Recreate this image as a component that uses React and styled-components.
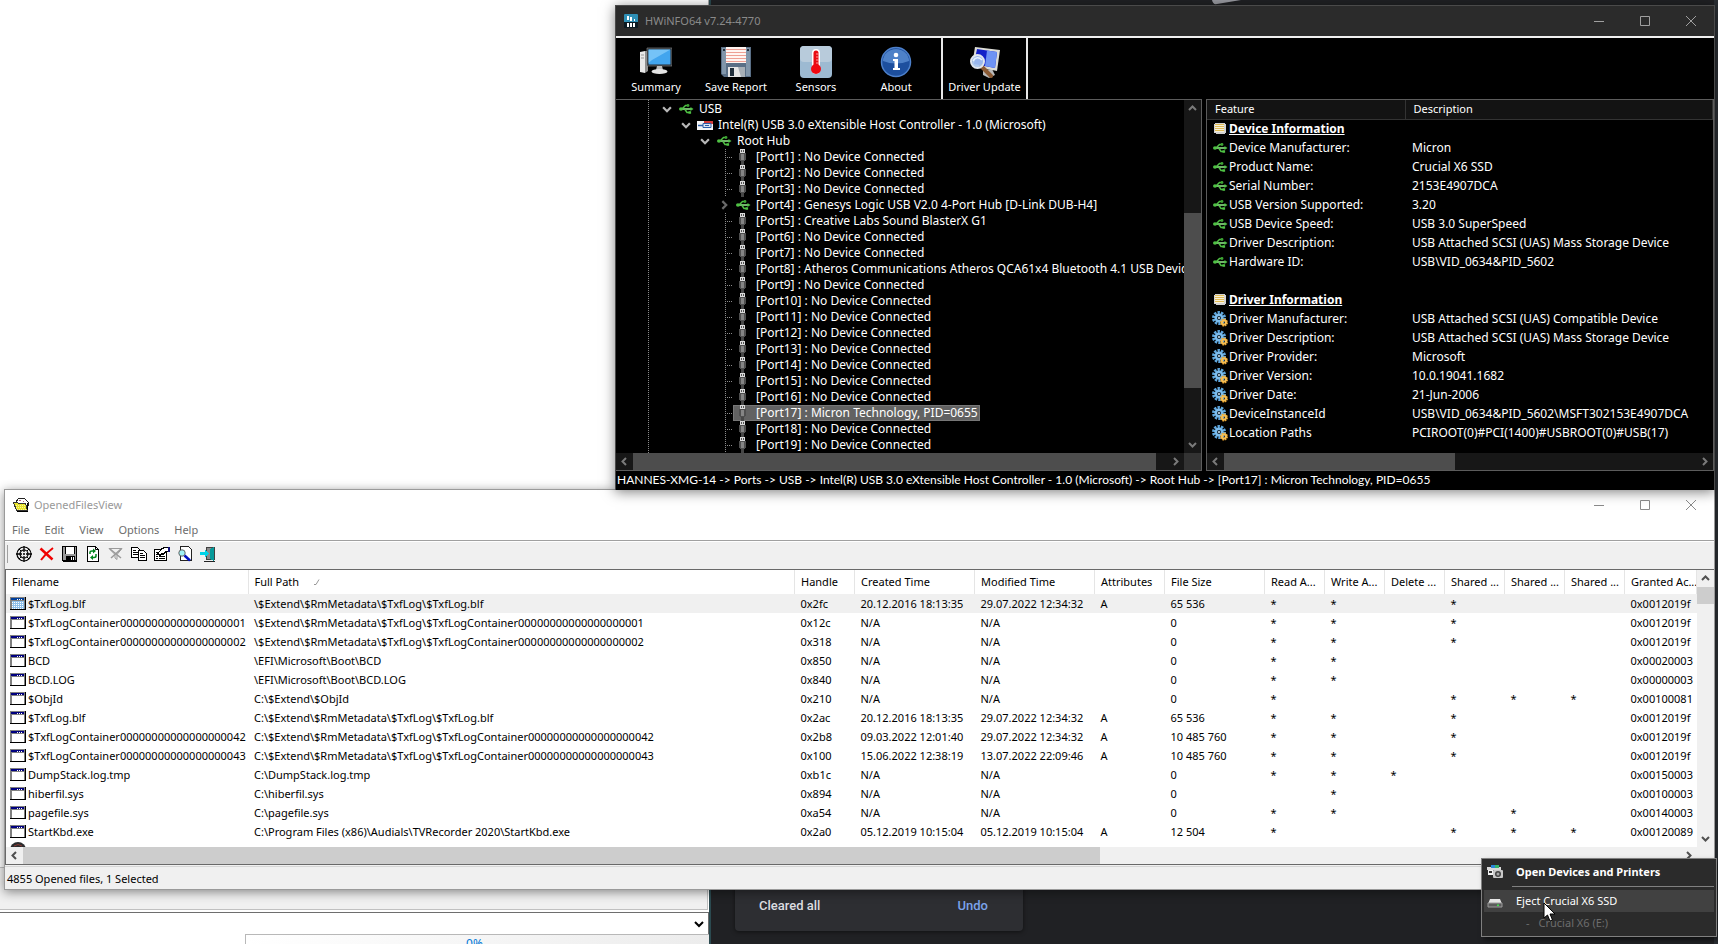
import React from 'react';
import styled, { createGlobalStyle, css } from 'styled-components';

const UI = '"Noto Sans", "Open Sans", sans-serif';

const GlobalStyle = createGlobalStyle`
  * { box-sizing: border-box; }
  html, body { margin: 0; height: 100%; }
  body { font: 11px/16px ${UI}; overflow: hidden; background: #202124; }
  button { font: inherit; color: inherit; background: none; border: 0; padding: 0; margin: 0; }
  ul { list-style: none; margin: 0; padding: 0; }
  svg { flex-shrink: 0; }
`;

/* ---------- desktop behind the windows ---------- */

const Desktop = styled.div`
  position: relative;
  display: flex;
  height: 100vh;
  overflow: hidden;
`;

const BackWindow = styled.section`
  flex: 0 0 711px;
  display: flex;
  flex-direction: column;
  background: #fff;
  border-right: 2px solid #2b4a50;
`;

const BackCanvas = styled.div`
  flex: 1;
  border-right: 1px solid #a8a8a8;
`;

const BackPanel = styled.div`
  height: 43px;
  margin-right: 1px;
  background: #f0f0f0;
  border: 1px solid #c0c0c0;
  border-left: 0;
`;

const BackSelectWrap = styled.label`
  display: flex;
  align-items: center;
  height: 22px;
  margin-top: 2px;
  padding-right: 3px;
  border-top: 1px solid #6e6e6e;
  border-right: 1px solid #6e6e6e;
`;

const BackSelect = styled.select`
  flex: 1;
  height: 20px;
  border: 0;
  appearance: none;
  background: #fff;
`;

const ProgressStrip = styled.div`
  display: flex;
  justify-content: flex-end;
  height: 10px;
  overflow: hidden;
`;

const ProgressBox = styled.div`
  flex: 0 0 464px;
  padding: 1px 6px 0 0;
  border-top: 1px solid #b8b8b8;
  border-left: 1px solid #b8b8b8;
  background: linear-gradient(90deg, #fff, #ececec);
  color: #0078d7;
  font-size: 12px;
  text-align: center;
`;

const DarkPage = styled.section`
  flex: 1;
  display: flex;
  flex-direction: column;
  justify-content: space-between;
  align-items: flex-start;
  background: #202124;
  border-right: 4px solid #2b2f34;
`;

const PageCorner = styled.svg`
  display: block;
  margin-left: 498px;
`;

const Toast = styled.div`
  display: flex;
  justify-content: space-between;
  align-items: center;
  width: 288px;
  height: 50px;
  margin: 0 0 13px 24px;
  padding: 0 35px 0 24px;
  border-radius: 4px;
  background: #2d2e32;
  box-shadow: 0 1px 4px rgba(0, 0, 0, 0.5);
  color: #dcdde0;
  font: 500 13px/20px Roboto, sans-serif;
`;

const ToastButton = styled.button`
  color: #7ba3ea;
`;

/* ---------- shared window parts ---------- */

const CaptionGroup = styled.div`
  display: flex;
  margin-left: auto;
  color: ${(p) => p.$color};
`;

const CaptionButton = styled.button`
  display: grid;
  place-items: center;
  width: 46px;
  height: 28px;
`;

const TitleText = styled.h1`
  margin: 0;
  font: inherit;
`;

const Track = styled.div`
  display: flex;
  flex-direction: ${(p) => (p.$vertical ? 'column' : 'row')};
  min-width: 0;
  background: ${(p) => (p.$dark ? '#171717' : '#f0f0f0')};
  color: ${(p) => (p.$dark ? '#7a7a7a' : '#505050')};
`;

const Arrow = styled.button`
  flex: 0 0 17px;
  display: grid;
  place-items: center;
`;

const Rail = styled.div`
  flex: 1;
  display: flex;
  flex-direction: inherit;
`;

const Thumb = styled.div`
  background: ${(p) => (p.$dark ? '#4d4d4d' : '#cdcdcd')};
`;

const CHEVRONS = {
  up: 'M1 6 4.5 2.5 8 6',
  down: 'M1 3 4.5 6.5 8 3',
  left: 'M6 1 2.5 4.5 6 8',
  right: 'M3 1 6.5 4.5 3 8',
};

function Chevron({ dir, size = 9, width = 2 }) {
  return (
    <svg width={size} height={size} viewBox="0 0 9 9" fill="none" stroke="currentColor" strokeWidth={width}>
      <path d={CHEVRONS[dir]} />
    </svg>
  );
}

function ScrollBar({ vertical, dark, start, length, className }) {
  const size = vertical ? 'height' : 'width';
  return (
    <Track $vertical={vertical} $dark={dark} className={className}>
      <Arrow aria-label="Scroll back"><Chevron dir={vertical ? 'up' : 'left'} /></Arrow>
      <Rail>
        <div style={{ [size]: `${start}%` }} />
        <Thumb $dark={dark} style={{ [size]: `${length}%` }} />
      </Rail>
      <Arrow aria-label="Scroll forward"><Chevron dir={vertical ? 'down' : 'right'} /></Arrow>
    </Track>
  );
}

function Captions({ color }) {
  return (
    <CaptionGroup $color={color}>
      <CaptionButton aria-label="Minimize">
        <svg width="10" height="10"><path d="M0 5.5h10" stroke="currentColor" /></svg>
      </CaptionButton>
      <CaptionButton aria-label="Maximize">
        <svg width="10" height="10"><path d="M.5.5h9v9h-9z" fill="none" stroke="currentColor" /></svg>
      </CaptionButton>
      <CaptionButton aria-label="Close">
        <svg width="10" height="10"><path d="M0 0l10 10M10 0L0 10" stroke="currentColor" /></svg>
      </CaptionButton>
    </CaptionGroup>
  );
}

/* ---------- HWiNFO64 ---------- */

const HwWindow = styled.section`
  position: absolute;
  top: 5px;
  left: 615px;
  right: 3px;
  border: 1px solid #4a4a4a;
  border-bottom: 0;
  background: #000;
  color: #fff;
  box-shadow: 0 2px 12px rgba(0, 0, 0, 0.5);
`;

const HwTitle = styled.header`
  display: flex;
  align-items: center;
  gap: 7px;
  height: 32px;
  padding-left: 8px;
  background: #2b2b2b;
  border-bottom: 2px solid #f0f0f0;
  color: #8a8a8a;
`;

const HwToolbar = styled.nav`
  display: flex;
  height: 61px;
`;

const HwTool = styled.button`
  display: flex;
  flex-direction: column;
  align-items: center;
  justify-content: flex-start;
  gap: 1px;
  width: ${(p) => (p.$framed ? '87px' : '80px')};
  padding-top: 8px;
  ${(p) => p.$framed && css`
    margin-left: 5px;
    border-left: 2px solid #e8e8e8;
    border-right: 2px solid #e8e8e8;
  `}
`;

const HwPanels = styled.div`
  display: grid;
  grid-template-columns: 586fr 508fr;
  gap: 4px;
`;

const TreePanel = styled.div`
  display: grid;
  grid-template-columns: minmax(0, 1fr) 17px;
  grid-template-rows: 353px 17px;
  border: 1px solid #5c5c5c;
  border-left: 0;
`;

const ScrollCorner = styled.div`
  background: #333;
`;

const Tree = styled.ul`
  margin-left: 32px;
  padding-top: 1px;
  border-left: 1px dotted #8a8a8a;
  overflow: hidden;
  font-size: 12px;
`;

const TreeRow = styled.div`
  display: flex;
  align-items: center;
  height: 16px;
  padding-left: ${(p) => 13 + p.$depth * 19}px;
  white-space: nowrap;
`;

const TreeToggle = styled.button`
  flex: 0 0 14px;
  display: flex;
  align-items: center;
  height: 16px;
  color: ${(p) => (p.$dim ? '#6a6a6a' : '#b8b8b8')};
`;

const TreeItem = styled.span`
  flex-shrink: 0;
  display: flex;
  align-items: center;
  gap: 5px;
  height: 16px;
  padding: 0 2px;
  ${(p) => p.$selected && css`
    background: #626262;
    box-shadow: inset 0 0 0 1px #777;
  `}
`;

const DetailPanel = styled.div`
  display: grid;
  grid-template-rows: 353px 17px;
  border: 1px solid #5c5c5c;
  min-width: 0;
`;

const DetailTable = styled.table`
  align-self: start;
  width: 100%;
  table-layout: fixed;
  border-collapse: collapse;
  font-size: 12px;
`;

const DetailHead = styled.th`
  height: 19px;
  padding: 0 0 0 8px;
  background: #131313;
  border-bottom: 1px solid #333;
  border-right: 1px solid #333;
  font-size: 11px;
  font-weight: 400;
  text-align: left;
`;

const DetailCell = styled.td`
  height: 19px;
  padding: 0 0 0 ${(p) => (p.$first ? '5px' : '7px')};
  white-space: nowrap;
`;

const DetailName = styled.span`
  display: flex;
  align-items: center;
  gap: 1px;
  height: 19px;
`;

const DetailTitle = styled.strong`
  text-decoration: underline;
`;

const HwStatus = styled.footer`
  height: 19px;
  padding: 0 1px;
  font: 12px/18px Lato, sans-serif;
  white-space: nowrap;
  overflow: hidden;
`;

const HwLogo = () => (
  <svg width="14" height="14" viewBox="0 0 14 14">
    <rect width="14" height="14" rx="1" fill="#0b1a22" />
    <path d="M0 1a1 1 0 011-1h12a1 1 0 011 1v7H0z" fill="#2f8fb5" />
    <path d="M3 2h2v4H3zM6 3h2v4H6zM10 5h1v2h-1zM3 9h2v4H3zM6 9h2v4H6zM9 9h2v4H9z" fill="#fff" />
  </svg>
);

const SummaryIcon = () => (
  <svg width="32" height="32" viewBox="0 0 32 32">
    <path d="M0 6l5-1v22l-5-1z" fill="#e8e8e8" />
    <path d="M5 5h3v20l-3 2z" fill="#8e8e8e" />
    <path d="M1 9h3M1 12h3" stroke="#999" />
    <path d="M7 2h25v18H7z" fill="#26292c" stroke="#8d9296" strokeWidth=".6" />
    <path d="M8.500 3.500h22v15h-22z" fill="#42a5ee" />
    <path d="M8.500 3.500h22L12 14l-3.500 3z" fill="#8bd0fb" opacity=".7" />
    <path d="M17 20h5l1 4h-7z" fill="#bdbdbd" />
    <ellipse cx="19.500" cy="25.500" rx="8" ry="2.500" fill="#e4e4e4" />
  </svg>
);

const SaveIcon = () => (
  <svg width="32" height="32" viewBox="0 0 32 32">
    <path d="M1 1h30v30H4l-3-3z" fill="#5a6f86" />
    <path d="M2 2h4v26H2zM26 2h4v28h-4z" fill="#8196aa" />
    <path d="M6 1h20v16H6z" fill="#fff5f1" />
    <path d="M6 3.500h20M6 6.500h20M6 9.500h20M6 12.500h20M6 15.500h20" stroke="#ee9f93" />
    <path d="M8 21h17v10H8z" fill="#e6e6e6" />
    <path d="M10 22h4v8h-4z" fill="#22303c" />
    <path d="M18 21h7v10h-4z" fill="#a7afb6" />
    <path d="M3 3h2v2H3zM27 3h2v2h-2z" fill="#26323e" />
  </svg>
);

const SensorIcon = () => (
  <svg width="32" height="32" viewBox="0 0 32 32">
    <rect width="32" height="32" rx="4" fill="#9dbad2" />
    <rect width="32" height="16" rx="4" fill="#b8cbdb" />
    <path d="M16 7v17" stroke="#fff" strokeWidth="8" strokeLinecap="round" />
    <path d="M16 7v17" stroke="#e80b12" strokeWidth="5" strokeLinecap="round" />
    <circle cx="16" cy="23" r="5" fill="#f00810" />
    <path d="M16 8h3M16 11h3M16 14h3M16 17h3" stroke="#ff9a9a" />
  </svg>
);

const AboutIcon = () => (
  <svg width="32" height="32" viewBox="0 0 32 32">
    <circle cx="16" cy="16" r="14.500" fill="#1d4f9e" stroke="#4d80cb" strokeWidth="1.500" />
    <path d="M3 15a13 12 0 0126 0q-13 5-26 0z" fill="#5f92d6" opacity=".75" />
    <circle cx="16" cy="9" r="2.300" fill="#fff" />
    <path d="M13 13h5v9h2v2h-7v-2h1.500v-7H13z" fill="#fff" />
  </svg>
);

const UpdateIcon = () => (
  <svg width="32" height="32" viewBox="0 0 32 32">
    <path d="M14 24l9-1 3 6-6 3-6-3z" fill="#b9b9b9" />
    <path d="M6 1l25 3-3 21L3 20z" fill="#dcdcd6" />
    <path d="M8 3l20 3-2 16L5 18z" fill="#1322c8" />
    <path d="M18 4.500l10 1.500-2 16-10-2z" fill="#6e93f4" />
    <path d="M12 20l10 10" stroke="#8a5a34" strokeWidth="4" strokeLinecap="round" />
    <circle cx="8.500" cy="15.500" r="6.500" fill="#a8c8f2" fillOpacity=".9" stroke="#e0e6ee" strokeWidth="2" />
    <path d="M4 15q4-6 9-1" stroke="#e7f2ff" strokeWidth="1.500" fill="none" />
  </svg>
);

const UsbIcon = () => (
  <svg width="16" height="16" viewBox="0 0 16 16" fill="none" stroke="#4fc244">
    <path d="M2 8h12" stroke="#8fe486" strokeWidth="1.600" />
    <path d="M4.500 7.500l3-3h2.500M7 8.500l2 3h2.500" strokeWidth="1.500" />
    <ellipse cx="3" cy="8" rx="2" ry="1.700" fill="#4fc244" stroke="none" />
    <circle cx="10" cy="4.500" r="1.400" fill="#3da333" stroke="none" />
    <path d="M10.500 10.200h2.600v2.600h-2.600zM12.500 6l3 2-3 2z" fill="#4fc244" stroke="none" />
  </svg>
);

const ControllerIcon = () => (
  <svg width="16" height="16" viewBox="0 0 16 16">
    <path d="M0 4h16v9H0z" fill="#f4f4f6" />
    <path d="M7 4h9v3H7z" fill="#d23a38" />
    <path d="M1 8.500h6" stroke="#2c5ea8" strokeWidth="1.500" />
    <path d="M6 6.500h8v4H6z" fill="#dce6f5" stroke="#2c5ea8" />
    <path d="M8 8.500h4" stroke="#2c5ea8" />
  </svg>
);

const PlugIcon = () => (
  <svg width="16" height="16" viewBox="0 0 16 16" shapeRendering="crispEdges">
    <path d="M6 12h3v4H6z" fill="#474747" />
    <path d="M5 0h5v4H5z" fill="#dadada" />
    <path d="M6 1h1v2H6zM8 1h1v2H8z" fill="#555" />
    <path d="M4 4h7v6l-1 2H5l-1-2z" fill="#4f4f4f" />
    <path d="M6 5h3v6H6z" fill="#858585" />
  </svg>
);

const LeafLines = () => (
  <svg width="14" height="16" shapeRendering="crispEdges" stroke="#8a8a8a" strokeDasharray="1 1" fill="none">
    <path d="M6.500 0v16M8 8.500h6" />
  </svg>
);

const ListIcon = () => (
  <svg width="16" height="16" viewBox="0 0 16 16" shapeRendering="crispEdges">
    <path d="M2 3h1V2h10v1h1v9h-1v1H4v-1H2z" fill="#d2d2d2" />
    <path d="M3 3.500h9M3 5.500h9M3 7.500h9M3 9.500h9" stroke="#e0bb55" />
    <path d="M3 4.500h9M3 6.500h9M3 8.500h9M3 10.500h9" stroke="#f7f0da" />
  </svg>
);

const GearIcon = () => (
  <svg width="16" height="16" viewBox="0 0 16 16">
    <circle cx="7" cy="7" r="5.500" fill="none" stroke="#5fa8e0" strokeWidth="3" strokeDasharray="2.300 1.100" />
    <circle cx="7" cy="7" r="4.500" fill="#7cbcec" />
    <circle cx="7" cy="7" r="2" fill="#10222f" />
    <circle cx="7" cy="7" r="1" fill="#d6ecfc" />
    <circle cx="12" cy="11.500" r="3" fill="none" stroke="#f0a62e" strokeWidth="2" strokeDasharray="1.600 .7" />
    <circle cx="12" cy="11.500" r="2" fill="none" stroke="#f6bf55" strokeWidth="2" />
  </svg>
);

const HW_TOOLS = [
  ['Summary', SummaryIcon],
  ['Save Report', SaveIcon],
  ['Sensors', SensorIcon],
  ['About', AboutIcon],
];

const PORT_NAMES = {
  4: 'Genesys Logic USB V2.0 4-Port Hub [D-Link DUB-H4]',
  5: 'Creative Labs Sound BlasterX G1',
  8: 'Atheros Communications Atheros QCA61x4 Bluetooth 4.1 USB Devic',
  17: 'Micron Technology, PID=0655',
};

const PORTS = Array.from({ length: 19 }, (_, i) => ({
  id: i + 1,
  label: `[Port${i + 1}] : ${PORT_NAMES[i + 1] || 'No Device Connected'}`,
  hub: i + 1 === 4,
  selected: i + 1 === 17,
}));

const DETAILS = [
  { title: 'Device Information' },
  { icon: UsbIcon, name: 'Device Manufacturer:', value: 'Micron' },
  { icon: UsbIcon, name: 'Product Name:', value: 'Crucial X6 SSD' },
  { icon: UsbIcon, name: 'Serial Number:', value: '2153E4907DCA' },
  { icon: UsbIcon, name: 'USB Version Supported:', value: '3.20' },
  { icon: UsbIcon, name: 'USB Device Speed:', value: 'USB 3.0 SuperSpeed' },
  { icon: UsbIcon, name: 'Driver Description:', value: 'USB Attached SCSI (UAS) Mass Storage Device' },
  { icon: UsbIcon, name: 'Hardware ID:', value: 'USB\\VID_0634&PID_5602' },
  {},
  { title: 'Driver Information' },
  { icon: GearIcon, name: 'Driver Manufacturer:', value: 'USB Attached SCSI (UAS) Compatible Device' },
  { icon: GearIcon, name: 'Driver Description:', value: 'USB Attached SCSI (UAS) Mass Storage Device' },
  { icon: GearIcon, name: 'Driver Provider:', value: 'Microsoft' },
  { icon: GearIcon, name: 'Driver Version:', value: '10.0.19041.1682' },
  { icon: GearIcon, name: 'Driver Date:', value: '21-Jun-2006' },
  { icon: GearIcon, name: 'DeviceInstanceId', value: 'USB\\VID_0634&PID_5602\\MSFT302153E4907DCA' },
  { icon: GearIcon, name: 'Location Paths', value: 'PCIROOT(0)#PCI(1400)#USBROOT(0)#USB(17)' },
];

function Branch({ depth, icon: Icon, label, children }) {
  return (
    <li>
      <TreeRow $depth={depth}>
        <TreeToggle aria-label={`Collapse ${label}`}><Chevron dir="down" size={10} /></TreeToggle>
        <TreeItem><Icon />{label}</TreeItem>
      </TreeRow>
      <ul>{children}</ul>
    </li>
  );
}

function HwInfo() {
  return (
    <HwWindow>
      <HwTitle>
        <HwLogo />
        <TitleText>HWiNFO64 v7.24-4770</TitleText>
        <Captions color="#a0a0a0" />
      </HwTitle>
      <HwToolbar>
        {HW_TOOLS.map(([label, Icon]) => (
          <HwTool key={label}><Icon />{label}</HwTool>
        ))}
        <HwTool $framed><UpdateIcon />Driver Update</HwTool>
      </HwToolbar>
      <HwPanels>
        <TreePanel>
          <Tree>
            <Branch depth={0} icon={UsbIcon} label="USB">
              <Branch depth={1} icon={ControllerIcon} label="Intel(R) USB 3.0 eXtensible Host Controller - 1.0 (Microsoft)">
                <Branch depth={2} icon={UsbIcon} label="Root Hub">
                  {PORTS.map((port) => (
                    <li key={port.id}>
                      <TreeRow $depth={3}>
                        {port.hub
                          ? <TreeToggle $dim aria-label="Expand hub"><Chevron dir="right" size={10} /></TreeToggle>
                          : <LeafLines />}
                        <TreeItem $selected={port.selected}>
                          {port.hub ? <UsbIcon /> : <PlugIcon />}
                          {port.label}
                        </TreeItem>
                      </TreeRow>
                    </li>
                  ))}
                </Branch>
              </Branch>
            </Branch>
          </Tree>
          <ScrollBar vertical dark start={30} length={55} />
          <ScrollBar dark start={0} length={98} />
          <ScrollCorner />
        </TreePanel>
        <DetailPanel>
          <DetailTable>
            <colgroup><col width="198" /><col /></colgroup>
            <thead>
              <tr><DetailHead>Feature</DetailHead><DetailHead>Description</DetailHead></tr>
            </thead>
            <tbody>
              {DETAILS.map(({ title, icon: Icon, name, value }, i) => (
                <tr key={i}>
                  <DetailCell $first>
                    <DetailName>
                      {title ? <><ListIcon /><DetailTitle>{title}</DetailTitle></> : Icon && <><Icon />{name}</>}
                    </DetailName>
                  </DetailCell>
                  <DetailCell>{value}</DetailCell>
                </tr>
              ))}
            </tbody>
          </DetailTable>
          <ScrollBar dark start={0} length={49} />
        </DetailPanel>
      </HwPanels>
      <HwStatus>
        {'HANNES-XMG-14 -> Ports -> USB -> Intel(R) USB 3.0 eXtensible Host Controller - 1.0 (Microsoft) -> Root Hub -> [Port17] : Micron Technology, PID=0655'}
      </HwStatus>
    </HwWindow>
  );
}

/* ---------- OpenedFilesView ---------- */

const FilesWindow = styled.section`
  position: absolute;
  top: 489px;
  left: 4px;
  right: 3px;
  border: 1px solid #9a9a9a;
  background: #f0f0f0;
  color: #000;
  box-shadow: 0 2px 10px rgba(0, 0, 0, 0.45);
`;

const FilesTitle = styled.header`
  display: flex;
  align-items: center;
  gap: 5px;
  height: 30px;
  padding-left: 8px;
  background: #fff;
  color: #999;
`;

const MenuBar = styled.nav`
  display: flex;
  height: 21px;
  padding-left: 7px;
  gap: 15px;
  background: #fff;
  border-bottom: 1px solid #a0a0a0;
  color: #6d6d6d;
`;

const FilesToolbar = styled.div`
  display: flex;
  align-items: center;
  height: 28px;
  padding-bottom: 4px;
  border-top: 1px solid #fff;
  &::before {
    content: '';
    width: 1px;
    height: 18px;
    margin: 0 4px 0 2px;
    background: #a0a0a0;
  }
`;

const ToolButton = styled.button`
  display: grid;
  place-items: center;
  width: 23px;
  height: 22px;
`;

const ListView = styled.div`
  display: grid;
  grid-template-columns: minmax(0, 1fr) 17px;
  grid-template-rows: 277px 17px;
  border: 1px solid #696969;
  border-right: 0;
  background: #fff;
`;

const ListCorner = styled.div`
  background: #f0f0f0;
`;

const ListBody = styled.div`
  overflow: hidden;
`;

const FileTable = styled.table`
  width: 100%;
  table-layout: fixed;
  border-collapse: collapse;
`;

const HeadCell = styled.th`
  height: 24px;
  padding: 0 0 0 6px;
  border-right: 1px solid #e5e5e5;
  font-weight: 400;
  text-align: left;
  white-space: nowrap;
  overflow: hidden;
`;

const SortMark = styled.svg`
  margin-left: 14px;
`;

const FileRow = styled.tr`
  background: ${(p) => (p.$selected ? '#f0f0f0' : '#fff')};
`;

const Cell = styled.td`
  height: 19px;
  padding: 0 0 0 6px;
  white-space: nowrap;
  overflow: hidden;
`;

const NameCell = styled(Cell)`
  padding-left: 4px;
`;

const FileName = styled.span`
  display: flex;
  align-items: center;
  gap: 2px;
`;

const FilesStatus = styled.footer`
  height: 23px;
  margin-top: 1px;
  padding: 4px 2px 0;
  border-top: 1px solid #d5d5d5;
`;

const FolderIcon = () => (
  <svg width="16" height="16" viewBox="0 0 16 16" shapeRendering="crispEdges">
    <path d="M3 5l2-3 3-1 4 1 3 3v3H3z" fill="#fff" stroke="#222" />
    <path d="M6 3h2v1H6zM10 4h1v1h-1z" fill="#b85c7a" />
    <path d="M.5 5.500h4l1 1h7l2 7h-11z" fill="#e9e32a" stroke="#333" />
    <path d="M3 8.500h10M3 10.500h10M4 12.500h9" stroke="#f8f6a0" strokeDasharray="1 1" />
    <path d="M14 6h1v7h-1zM4 14h11v1H4z" fill="#000" />
  </svg>
);

const AppIcon = ({ selected }) => (
  <svg width="16" height="16" viewBox="0 0 16 16" shapeRendering="crispEdges">
    <path d="M0 1h16v13H0z" fill="#000" />
    <path d="M0 1h15v12H0z" fill="#808080" />
    <path d="M1 2h13v2H1z" fill={selected ? '#003f9c' : '#00007f'} />
    <path d="M7 3h1v1H7zM9 3h1v1H9zM11 3h1v1h-1z" fill="#fff" />
    <path d="M2 5h12v8H2z" fill={selected ? '#8fc0ea' : '#fff'} />
    {selected && <path d="M2 6.500h12M2 8.500h12M2 10.500h12M2 12.500h12" stroke="#fff" strokeDasharray="1 1" />}
  </svg>
);

const TargetIcon = () => (
  <svg width="16" height="16" viewBox="0 0 16 16" fill="none" stroke="#000">
    <circle cx="8" cy="8" r="7" strokeWidth="1.200" />
    <circle cx="8" cy="8" r="4" strokeWidth="1.200" />
    <path d="M8 0v6M8 10v6M0 8h6M10 8h6" strokeWidth="1.300" />
    <path d="M3 3l2 2M13 3l-2 2M3 13l2-2M13 13l-2-2" />
    <circle cx="8" cy="8" r="1" fill="#000" stroke="none" />
  </svg>
);
const CrossIcon = () => (
  <svg width="16" height="16" viewBox="0 0 16 16" fill="none" stroke="#f00000">
    <path d="M1.500 2.500l12 11" strokeWidth="2.500" />
    <path d="M14 2Q7 7 2 14" strokeWidth="2" />
  </svg>
);
const DiskIcon = () => (
  <svg width="16" height="16" viewBox="0 0 16 16" shapeRendering="crispEdges">
    <path d="M0 0h15v16H1l-1-1z" fill="#000" />
    <path d="M1 1h13v13H1z" fill="#9a9a9a" />
    <path d="M3 0h10v8H3z" fill="#000" />
    <path d="M4 1h8v7H4z" fill="#fff" />
    <path d="M4 10h9v5H4z" fill="#000" />
    <path d="M9 11h1v3H9zM11 11h1v3h-1z" fill="#fff" />
  </svg>
);
const RefreshIcon = () => (
  <svg width="16" height="16" viewBox="0 0 16 16">
    <path d="M2.500.5h8l3 3v12h-11z" fill="#fff" stroke="#000" shapeRendering="crispEdges" />
    <path d="M10.500.5v3h3" fill="none" stroke="#000" />
    <path d="M5 8V6q0-1 2-1h2M11 8v2q0 1.500-2 1.500H7" fill="none" stroke="#00851c" strokeWidth="1.500" />
    <path d="M8 2.500L11 5 8 7.500zM8 9v5l-3-2.500z" fill="#00851c" />
  </svg>
);
const FilterIcon = () => (
  <svg width="16" height="16" viewBox="0 0 16 16" fill="none" stroke="#9a9a9a">
    <path d="M1 2.500h13l-5 6v5l-2-1.500V8.500z" />
    <path d="M2 3l11 9M13 3L3 12" strokeWidth="1.500" />
  </svg>
);
const CopyIcon = () => (
  <svg width="16" height="16" viewBox="0 0 16 16" fill="#fff" stroke="#000" shapeRendering="crispEdges">
    <path d="M.5 1.500h6l2 2v8h-8z" />
    <path d="M2 4.500h3M2 6.500h5M2 8.500h5" />
    <path d="M7.500 4.500h5l3 3v7h-8z" />
    <path d="M9 7.500h3M9 9.500h5M9 11.500h5" />
  </svg>
);
const PropsIcon = () => (
  <svg width="16" height="16" viewBox="0 0 16 16" fill="#fff" stroke="#000" shapeRendering="crispEdges">
    <path d="M.5 3.500h12v11H.5z" />
    <path d="M2 6.500h2M2 8.500h2M2 10.500h2M2 12.500h2M5 10.500h6M5 12.500h6" />
    <path d="M4 7.500l4-5 3-1h4v4h-3l-3 3-1-1-2 2z" />
    <path d="M14 1h2v5h-2z" fill="#10107a" stroke="none" />
  </svg>
);
const FindIcon = () => (
  <svg width="16" height="16" viewBox="0 0 16 16">
    <path d="M3.500.5h8l3 3v11h-11z" fill="#fff" stroke="#222" shapeRendering="crispEdges" />
    <circle cx="5" cy="7" r="3.200" fill="#9ff1f6" stroke="#666" />
    <path d="M7.500 9.500l5.500 5" stroke="#0010c0" strokeWidth="2.500" />
  </svg>
);
const ExitIcon = () => (
  <svg width="16" height="16" viewBox="0 0 16 16" shapeRendering="crispEdges">
    <path d="M6 1h9v13H6z" fill="#404040" />
    <path d="M7 2h4v11H7z" fill="#8a8a8a" />
    <path d="M10 3l4-2v14l-4-2z" fill="#069a9a" />
    <path d="M0 6h5V3l4 4.500L5 12V9H0z" fill="#00d3e8" />
    <path d="M4 15h11" stroke="#222" />
  </svg>
);

const FILE_TOOLS = [
  ['Target', TargetIcon],
  ['Close handle', CrossIcon],
  ['Save', DiskIcon],
  ['Refresh', RefreshIcon],
  ['Filter', FilterIcon],
  ['Copy', CopyIcon],
  ['Properties', PropsIcon],
  ['Find', FindIcon],
  ['Exit', ExitIcon],
];

const COLUMNS = [
  ['Filename', 242],
  ['Full Path', null],
  ['Handle', 60],
  ['Created Time', 120],
  ['Modified Time', 120],
  ['Attributes', 70],
  ['File Size', 100],
  ['Read A...', 60],
  ['Write A...', 60],
  ['Delete ...', 60],
  ['Shared ...', 60],
  ['Shared ...', 60],
  ['Shared ...', 60],
  ['Granted Ac...', 72],
];

const NA = 'N/A';
const FILES = [
  ['$TxfLog.blf', '\\$Extend\\$RmMetadata\\$TxfLog\\$TxfLog.blf', '0x2fc', '20.12.2016 18:13:35', '29.07.2022 12:34:32', 'A', '65 536', '**-*--', '0x0012019f'],
  ['$TxfLogContainer00000000000000000001', '\\$Extend\\$RmMetadata\\$TxfLog\\$TxfLogContainer00000000000000000001', '0x12c', NA, NA, '', '0', '**-*--', '0x0012019f'],
  ['$TxfLogContainer00000000000000000002', '\\$Extend\\$RmMetadata\\$TxfLog\\$TxfLogContainer00000000000000000002', '0x318', NA, NA, '', '0', '**-*--', '0x0012019f'],
  ['BCD', '\\EFI\\Microsoft\\Boot\\BCD', '0x850', NA, NA, '', '0', '**----', '0x00020003'],
  ['BCD.LOG', '\\EFI\\Microsoft\\Boot\\BCD.LOG', '0x840', NA, NA, '', '0', '**----', '0x00000003'],
  ['$ObjId', 'C:\\$Extend\\$ObjId', '0x210', NA, NA, '', '0', '*--***', '0x00100081'],
  ['$TxfLog.blf', 'C:\\$Extend\\$RmMetadata\\$TxfLog\\$TxfLog.blf', '0x2ac', '20.12.2016 18:13:35', '29.07.2022 12:34:32', 'A', '65 536', '**-*--', '0x0012019f'],
  ['$TxfLogContainer00000000000000000042', 'C:\\$Extend\\$RmMetadata\\$TxfLog\\$TxfLogContainer00000000000000000042', '0x2b8', '09.03.2022 12:01:40', '29.07.2022 12:34:32', 'A', '10 485 760', '**-*--', '0x0012019f'],
  ['$TxfLogContainer00000000000000000043', 'C:\\$Extend\\$RmMetadata\\$TxfLog\\$TxfLogContainer00000000000000000043', '0x100', '15.06.2022 12:38:19', '13.07.2022 22:09:46', 'A', '10 485 760', '**-*--', '0x0012019f'],
  ['DumpStack.log.tmp', 'C:\\DumpStack.log.tmp', '0xb1c', NA, NA, '', '0', '***---', '0x00150003'],
  ['hiberfil.sys', 'C:\\hiberfil.sys', '0x894', NA, NA, '', '0', '-*----', '0x00100003'],
  ['pagefile.sys', 'C:\\pagefile.sys', '0xa54', NA, NA, '', '0', '**--*-', '0x00140003'],
  ['StartKbd.exe', 'C:\\Program Files (x86)\\Audials\\TVRecorder 2020\\StartKbd.exe', '0x2a0', '05.12.2019 10:15:04', '05.12.2019 10:15:04', 'A', '12 504', '*--***', '0x00120089'],
];

const NextRowIcon = styled.svg`
  display: block;
  margin-left: 4px;
`;

function OpenedFiles() {
  return (
    <FilesWindow>
      <FilesTitle>
        <FolderIcon />
        <TitleText>OpenedFilesView</TitleText>
        <Captions color="#8a8a8a" />
      </FilesTitle>
      <MenuBar>
        {['File', 'Edit', 'View', 'Options', 'Help'].map((item) => <button key={item}>{item}</button>)}
      </MenuBar>
      <FilesToolbar>
        {FILE_TOOLS.map(([label, Icon]) => (
          <ToolButton key={label} aria-label={label}><Icon /></ToolButton>
        ))}
      </FilesToolbar>
      <ListView>
        <ListBody>
          <FileTable>
            <colgroup>{COLUMNS.map(([, width], i) => <col key={i} width={width || undefined} />)}</colgroup>
            <thead>
              <tr>
                {COLUMNS.map(([label], i) => (
                  <HeadCell key={i}>
                    {label}
                    {label === 'Full Path' && (
                      <SortMark width="8" height="8"><path d="M1 6.500h2l3-5" fill="none" stroke="#999" /></SortMark>
                    )}
                  </HeadCell>
                ))}
              </tr>
            </thead>
            <tbody>
              {FILES.map(([name, path, handle, created, modified, attrs, size, access, granted], i) => (
                <FileRow key={i} $selected={i === 0}>
                  <NameCell><FileName><AppIcon selected={i === 0} />{name}</FileName></NameCell>
                  <Cell>{path}</Cell>
                  <Cell>{handle}</Cell>
                  <Cell>{created}</Cell>
                  <Cell>{modified}</Cell>
                  <Cell>{attrs}</Cell>
                  <Cell>{size}</Cell>
                  {access.split('').map((flag, j) => <Cell key={j}>{flag === '*' ? '*' : ''}</Cell>)}
                  <Cell>{granted}</Cell>
                </FileRow>
              ))}
            </tbody>
          </FileTable>
          <NextRowIcon width="16" height="16"><circle cx="8" cy="9" r="8" fill="#2c2c2e" /><path d="M4 5q4-3 8 0" stroke="#8a3a34" fill="none" /></NextRowIcon>
        </ListBody>
        <ScrollBar vertical start={0} length={7} />
        <ScrollBar start={0} length={65} />
        <ListCorner />
      </ListView>
      <FilesStatus>4855 Opened files, 1 Selected</FilesStatus>
    </FilesWindow>
  );
}

/* ---------- eject menu ---------- */

const EjectMenu = styled.div`
  position: absolute;
  right: 1px;
  bottom: 7px;
  width: 236px;
  padding: 2px;
  border: 1px solid #808080;
  background: #2b2b2b;
  box-shadow: 3px 3px 5px rgba(0, 0, 0, 0.5);
  color: #fff;
`;

const MenuItem = styled.button`
  display: flex;
  align-items: center;
  gap: ${(p) => (p.$sub ? '9px' : '13px')};
  width: 100%;
  height: 22px;
  padding-left: ${(p) => (p.$sub ? '42px' : '3px')};
  background: ${(p) => (p.$active ? '#414141' : 'transparent')};
  color: ${(p) => (p.$sub ? '#6d6d6d' : '#fff')};
  font-weight: ${(p) => (p.$bold ? 700 : 400)};
  text-align: left;
`;

const MenuRule = styled.hr`
  height: 1px;
  margin: 3px 0 3px 28px;
  border: 0;
  background: #808080;
`;

const Pointer = styled.svg`
  position: absolute;
  top: 43px;
  left: 61px;
`;

const PrinterIcon = () => (
  <svg width="16" height="16" viewBox="0 0 16 16">
    <path d="M0 3h14v3H0z" fill="#d9d9d9" />
    <path d="M4 1h8v3H4z" fill="#2a86d8" />
    <path d="M8 1h4v3H8z" fill="#36b56a" />
    <path d="M1 6h5v5H1z" fill="#f2f2f2" />
    <path d="M2 7h3v2H2z" fill="#333" />
    <rect x="6" y="6" width="10" height="8" rx="1" fill="#c9c9c9" />
    <circle cx="11" cy="10" r="3" fill="#444" />
    <circle cx="11" cy="10" r="1.500" fill="#a8a8a8" />
  </svg>
);

const DriveIcon = () => (
  <svg width="16" height="16" viewBox="0 0 16 16">
    <path d="M3 6h10l2 5H1z" fill="#e6e6e6" />
    <path d="M1 10h14v4H1z" fill="#5c5c5c" stroke="#9c9c9c" />
    <path d="M10 11.500h2v1.500h-2z" fill="#3fe04b" />
  </svg>
);

export default function App() {
  return (
    <>
      <GlobalStyle />
      <Desktop>
        <BackWindow>
          <BackCanvas />
          <BackPanel />
          <BackSelectWrap>
            <BackSelect aria-label="Selection" />
            <svg width="12" height="8"><path d="M2 2l4 4 4-4" fill="none" stroke="#000" strokeWidth="2" /></svg>
          </BackSelectWrap>
          <ProgressStrip><ProgressBox>0%</ProgressBox></ProgressStrip>
        </BackWindow>
        <DarkPage>
          <PageCorner width="34" height="5"><path d="M3 0h29L8 4q-4 1-5-4z" fill="#9a9ba1" /></PageCorner>
          <Toast>Cleared all<ToastButton>Undo</ToastButton></Toast>
        </DarkPage>
        <OpenedFiles />
        <HwInfo />
        <EjectMenu role="menu">
          <MenuItem $bold><PrinterIcon />Open Devices and Printers</MenuItem>
          <MenuRule />
          <MenuItem $active><DriveIcon />Eject Crucial X6 SSD</MenuItem>
          <MenuItem $sub><span>-</span>Crucial X6 (E:)</MenuItem>
          <Pointer width="13" height="20"><path d="M1 1v15l3.500-3 2.500 6 2.500-1-2.500-6h5z" fill="#fff" stroke="#000" /></Pointer>
        </EjectMenu>
      </Desktop>
    </>
  );
}
